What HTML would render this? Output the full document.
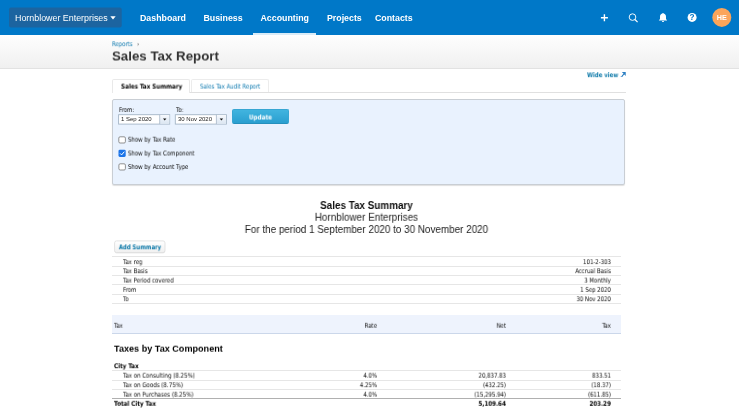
<!DOCTYPE html>
<html><head><meta charset="utf-8">
<style>
*{box-sizing:border-box;margin:0;padding:0}
html,body{width:739px;height:415px;overflow:hidden;background:linear-gradient(#0078c8 0,#0078c8 35px,#fff 35px,#fff 100%);font-family:"Liberation Sans",sans-serif;color:#222}
.abs{position:absolute}
.sp{transform:translateY(var(--dy,0px)) perspective(1000px) rotateX(0.010deg)}
.t{transform-origin:0 50%;transform:translateY(var(--dy,0px)) perspective(1000px) rotateX(0.010deg) scaleX(var(--sx,.923))}
.t.r{transform-origin:100% 50%}
.t.c{transform-origin:50% 50%}
#hdr{position:absolute;left:0;top:0;width:739px;height:35px;background:#0078c8}
#org{position:absolute;left:9px;top:8px;width:113px;height:19px;color:#fff;font-size:8.9px;line-height:21px;padding-left:6px;white-space:nowrap}
.nav{position:absolute;top:0;height:35px;line-height:37px;color:#fff;font-weight:bold;font-size:8.8px;white-space:nowrap}
#sub{position:absolute;left:0;top:35px;width:739px;height:34px;background:linear-gradient(#fefefe,#f0f0f0);border-bottom:1px solid #e2e2e2}
.t{position:absolute;white-space:nowrap;font-size:6.500px;line-height:7px;font-family:"DejaVu Sans Condensed","DejaVu Sans","Liberation Sans",sans-serif;font-stretch:condensed;color:#0a0a0a}
.r{text-align:right}
.b{font-weight:bold;color:#000;--sx:.960}
.hl{position:absolute;height:1px;background:#e6e6e6}
.h2{position:absolute;font-size:10px;line-height:12px;color:#111;white-space:nowrap;transform-origin:50% 50%;transform:translateY(var(--dy,0px)) perspective(1000px) rotateX(0.010deg) scaleX(var(--sx,1))}
</style></head><body><div id="wrap" style="position:absolute;left:0;top:0;width:739px;height:415px;overflow:hidden;will-change:transform;filter:blur(.300px)">
<div id="hdr">
 <svg class="abs" style="left:0;top:0" width="130" height="35"><rect x="9" y="7.600" width="112.700" height="20" rx="2" fill="#1c64a0"/><path d="M110.300 16.300h5.400l-2.700 3.200z" fill="#fff"/></svg>
 <div id="org">Hornblower Enterprises</div>
 <div class="nav" style="left:140px">Dashboard</div>
 <div class="nav" style="left:203.500px">Business</div>
 <div class="nav" style="left:260.500px">Accounting</div>
 <div class="nav" style="left:327px">Projects</div>
 <div class="nav" style="left:375px">Contacts</div>
 <div class="abs" style="left:253px;top:33px;width:63px;height:2px;background:#fff;opacity:.85"></div>
 <svg class="abs" style="left:590px;top:0" width="149" height="35" viewBox="0 0 149 35">
  <path d="M10.900 17.700h7M14.400 14.200v7" stroke="#fff" stroke-width="1.400" fill="none"/>
  <circle cx="42.500" cy="17.100" r="3.300" stroke="#fff" stroke-width="1" fill="none" opacity=".95"/>
  <path d="M44.900 19.500l2.700 2.700" stroke="#fff" stroke-width="1.200"/>
  <path d="M73 12.900c-.5 0-.7.300-.7.700-1.600.4-2.300 1.700-2.300 3.200v2.200l-1.200 1.500h8.400l-1.200-1.500v-2.200c0-1.500-.7-2.800-2.300-3.200 0-.4-.2-.7-.7-.7zM71.900 21a1.100 1.100 0 0 0 2.200 0z" fill="#fff"/>
  <circle cx="102.100" cy="17.400" r="4.500" fill="#fff"/>
  <text x="102.100" y="20.300" font-size="8.200" font-weight="bold" text-anchor="middle" fill="#0078c8" font-family="Liberation Sans, sans-serif">?</text>
  <circle cx="131.800" cy="17.400" r="9.500" fill="#fba55a"/>
  <text x="131.800" y="20" font-size="7.200" font-weight="bold" text-anchor="middle" fill="#fff" font-family="Liberation Sans, sans-serif">HE</text>
 </svg>
</div>
<div id="sub">
 <div class="t sp" style="left:112px;--dy:0.20px;top:6px;color:#0e7ab0">Reports</div>
 <div class="t sp" style="left:137px;--dy:0.20px;top:6px;color:#333;font-size:6.500px">›</div>
 <div class="abs sp" style="--dy:.500px;left:112px;top:12px;font-weight:bold;font-size:13.300px;line-height:18px;color:#333;white-space:nowrap">Sales Tax Report</div>
</div>

<div class="t sp" style="left:587.100px;--dy:0.20px;top:72px;color:#0b78a8;font-weight:bold;--sx:.923">Wide view</div>
<svg class="abs" style="left:620px;top:71px" width="7" height="7" viewBox="-0.100 0 7.700 7.700"><path d="M2 1.200h4.200v4.200l-1.500-1.500-2 2-.9-.9 2-2z" fill="#2b7fc3"/><path d="M0.700 6h2.300" stroke="#2b7fc3" stroke-width=".8"/></svg>

<!-- tabs -->
<div class="hl" style="left:112px;top:92px;width:514px;background:#e0e0e0"></div>
<div class="abs" style="left:112px;top:79px;width:78px;height:14px;background:#fff;border:1px solid #e9e9e9;border-bottom:none;border-radius:2px 2px 0 0"></div>
<div class="t b sp" style="left:121.300px;--dy:0.60px;top:83px">Sales Tax Summary</div>
<div class="abs" style="left:191px;top:79px;width:78px;height:13px;background:#fff;border:1px solid #ececec;border-bottom:none;border-radius:2px 2px 0 0"></div>
<div class="t sp" style="left:199.500px;--dy:0.60px;top:83px;color:#0e7ab0">Sales Tax Audit Report</div>

<!-- filter panel -->
<div class="abs" style="left:112px;top:99px;width:513px;height:86px;background:#e9f2fe;border:1px solid #c9ced4;border-radius:2px;box-shadow:0 1px 1px rgba(0,0,0,.13)"></div>
<div class="t" style="left:119px;top:107px">From:</div>
<div class="t" style="left:175.500px;top:107px">To:</div>
<svg class="abs" style="left:112px;top:99px" width="130" height="40" viewBox="112 99 130 40">
 <defs><linearGradient id="dg" x1="0" y1="0" x2="0" y2="1"><stop offset="0" stop-color="#f6f9fd"/><stop offset="1" stop-color="#dbe6f2"/></linearGradient></defs>
 <rect x="118.600" y="114.700" width="51.100" height="9.400" fill="#fff" stroke="#a4b5c6" stroke-width=".9"/>
 <rect x="159.800" y="115.100" width="9.500" height="8.600" fill="url(#dg)"/>
 <path d="M159.700 114.700v9.400" stroke="#a4b5c6" stroke-width=".8"/>
 <path d="M163 118.600h3.400l-1.700 2z" fill="#111"/>
 <rect x="175.300" y="114.700" width="51.100" height="9.400" fill="#fff" stroke="#a4b5c6" stroke-width=".9"/>
 <rect x="216.500" y="115.100" width="9.500" height="8.600" fill="url(#dg)"/>
 <path d="M216.400 114.700v9.400" stroke="#a4b5c6" stroke-width=".8"/>
 <path d="M219.700 118.600h3.400l-1.700 2z" fill="#111"/>
</svg>
<div class="t" style="left:121.200px;top:116px;font-family:'Liberation Sans',sans-serif;color:#222;font-size:6px;--sx:1">1 Sep 2020</div>
<div class="t" style="left:177.900px;top:116px;font-family:'Liberation Sans',sans-serif;color:#222;font-size:6px;--sx:1">30 Nov 2020</div>
<div class="abs" style="left:232px;top:109px;width:57px;height:15px;background:linear-gradient(#41b4df,#2a9fd0);border:1px solid #37a6d3;border-bottom-color:#2590bd;border-radius:2px"></div>
<div class="t c sp" style="--sx:.960;left:232px;--dy:0.50px;top:114px;width:57px;text-align:center;color:#fff;font-weight:bold">Update</div>

<svg class="abs" style="left:112px;top:130px" width="20" height="50" viewBox="112 130 20 50">
 <rect x="118.800" y="136.800" width="6.600" height="6.200" rx="1.300" fill="#fff" stroke="#767676" stroke-width=".8"/>
 <rect x="118.500" y="149.800" width="7.200" height="7.100" rx="1.300" fill="#1a73e8"/>
 <path d="M120.100 153.400l1.500 1.500 2.700-3.200" stroke="#fff" stroke-width="1" fill="none"/>
 <rect x="118.900" y="163.800" width="6.500" height="6.200" rx="1.300" fill="#fff" stroke="#767676" stroke-width=".8"/>
</svg>
<div class="t sp" style="left:128.300px;--dy:0.70px;top:136px">Show by Tax Rate</div>
<div class="t sp" style="left:128.300px;--dy:0.50px;top:150px">Show by Tax Component</div>
<div class="t" style="left:128.300px;top:164px">Show by Account Type</div>

<!-- report title -->
<div class="h2" style="left:112px;top:200px;font-size:10.200px;--sx:.970;width:509px;text-align:center;font-weight:bold">Sales Tax Summary</div>
<div class="h2 sp" style="left:112px;--dy:0.80px;top:211px;font-size:10.200px;--sx:.970;width:509px;text-align:center;color:#222">Hornblower Enterprises</div>
<div class="h2" style="left:112px;top:224px;font-size:10.200px;--sx:.970;width:509px;text-align:center;color:#222">For the period 1 September 2020 to 30 November 2020</div>

<svg class="abs" style="left:110px;top:236px" width="62" height="22" viewBox="110 236 62 22"><defs><linearGradient id="bg2" x1="0" y1="0" x2="0" y2="1"><stop offset="0" stop-color="#fff"/><stop offset="1" stop-color="#f0f0f0"/></linearGradient></defs><rect x="114.600" y="241.400" width="50.400" height="12" rx="2" fill="#000" opacity=".07"/><rect x="114.600" y="240.900" width="50.400" height="11.700" rx="2" fill="url(#bg2)" stroke="#dcdcdc" stroke-width=".8"/></svg>
<div class="t c sp" style="--sx:.920;left:113.700px;--dy:0.30px;top:244px;width:52px;text-align:center;color:#0b78a8;font-weight:bold">Add Summary</div>

<div class="hl" style="left:112px;top:256px;width:509px"></div>
<div class="t sp" style="left:123.400px;--dy:0.10px;top:259px">Tax reg</div><div class="t r sp" style="left:500px;width:111px;--dy:0.10px;top:259px">101-2-303</div>
<div class="hl" style="left:112px;top:266px;width:509px"></div>
<div class="t sp" style="left:123.400px;--dy:0.20px;top:268px">Tax Basis</div><div class="t r sp" style="left:500px;width:111px;--dy:0.20px;top:268px">Accrual Basis</div>
<div class="hl" style="left:112px;top:275px;width:509px"></div>
<div class="t sp" style="left:123.400px;--dy:0.60px;top:277px">Tax Period covered</div><div class="t r sp" style="left:500px;width:111px;--dy:0.60px;top:277px">3 Monthly</div>
<div class="hl" style="left:112px;top:284px;width:509px"></div>
<div class="t sp" style="left:123.400px;--dy:0.90px;top:286px">From</div><div class="t r sp" style="left:500px;width:111px;--dy:0.90px;top:286px">1 Sep 2020</div>
<div class="hl" style="left:112px;top:294px;width:509px"></div>
<div class="t sp" style="left:123.400px;--dy:0.20px;top:296px">To</div><div class="t r sp" style="left:500px;width:111px;--dy:0.20px;top:296px">30 Nov 2020</div>
<div class="hl" style="left:112px;top:303px;width:509px"></div>

<!-- table header -->
<div class="abs" style="left:112px;top:315px;width:509px;height:19px;background:#eef3fd;border-bottom:1px solid #cbd7ea"></div>
<div class="t sp" style="left:113.600px;--dy:0.80px;top:322px">Tax</div>
<div class="t r sp" style="left:300px;width:77px;--dy:0.80px;top:322px">Rate</div>
<div class="t r sp" style="left:400px;width:106px;--dy:0.80px;top:322px">Net</div>
<div class="t r sp" style="left:500px;width:111px;--dy:0.80px;top:322px">Tax</div>

<div class="h2 sp" style="left:114px;--dy:0.70px;top:342px;font-weight:bold;font-size:9.100px;color:#000">Taxes by Tax Component</div>

<div class="t b sp" style="left:114px;--dy:0.20px;top:363px">City Tax</div>
<div class="hl" style="left:112px;top:370px;width:509px"></div>
<div class="t sp" style="left:123.400px;--dy:0.70px;top:372px;--sx:.939">Tax on Consulting (8.25%)</div><div class="t r sp" style="left:300px;width:77px;--dy:0.70px;top:372px">4.0%</div><div class="t r sp" style="left:400px;width:106px;--dy:0.70px;top:372px">20,837.83</div><div class="t r sp" style="left:500px;width:111px;--dy:0.70px;top:372px">833.51</div>
<div class="hl" style="left:112px;top:380px;width:509px"></div>
<div class="t sp" style="left:123.400px;--dy:0.20px;top:382px;--sx:.939">Tax on Goods (8.75%)</div><div class="t r sp" style="left:300px;width:77px;--dy:0.20px;top:382px">4.25%</div><div class="t r sp" style="left:400px;width:106px;--dy:0.20px;top:382px">(432.25)</div><div class="t r sp" style="left:500px;width:111px;--dy:0.20px;top:382px">(18.37)</div>
<div class="hl" style="left:112px;top:389px;width:509px"></div>
<div class="t sp" style="left:123.400px;--dy:0.70px;top:391px;--sx:.939">Tax on Purchases (8.25%)</div><div class="t r sp" style="left:300px;width:77px;--dy:0.70px;top:391px">4.0%</div><div class="t r sp" style="left:400px;width:106px;--dy:0.70px;top:391px">(15,295.94)</div><div class="t r sp" style="left:500px;width:111px;--dy:0.70px;top:391px">(611.85)</div>
<div class="hl" style="left:112px;top:398px;width:509px;background:#b0b0b0"></div>
<div class="t b sp" style="left:114px;--dy:0.80px;top:400px">Total City Tax</div><div class="t r b sp" style="left:400px;width:106px;--dy:0.80px;top:400px">5,109.64</div><div class="t r b sp" style="left:500px;width:111px;--dy:0.80px;top:400px">203.29</div>
</div></body></html>
